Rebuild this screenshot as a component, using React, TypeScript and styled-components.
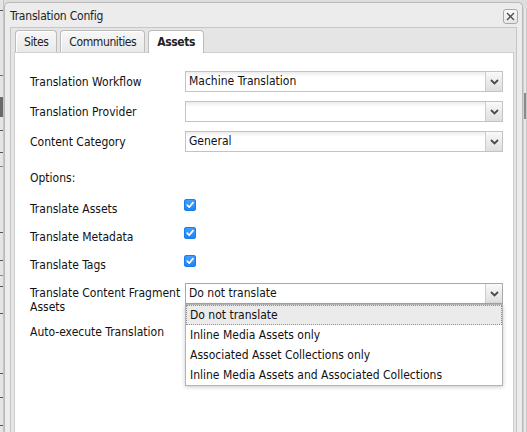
import React from "react";
import styled, { createGlobalStyle } from "styled-components";

const GlobalStyle = createGlobalStyle`
  html, body { margin: 0; padding: 0; background: #dcdcdc; }
  body {
    font-family: "DejaVu Sans Condensed", "DejaVu Sans", "Liberation Sans", sans-serif;
    font-stretch: condensed;
    font-size: 12px;
    color: #111;
  }
  * { box-sizing: border-box; }
`;

const Page = styled.div`
  width: 527px;
  height: 432px;
  display: flex;
  overflow: hidden;
  background: #dedede;
`;

const dot = (y: number, c = "#555") =>
  `linear-gradient(${c}, ${c}) 0 ${y}px / 3px 1px no-repeat`;

const LeftStrip = styled.div`
  width: 4px;
  flex: none;
  background: ${[
    dot(10),
    dot(75, "#4a6fb5"),
    "linear-gradient(#6a6a6a, #6a6a6a) 0 97px / 3px 20px no-repeat",
    dot(130),
    dot(152),
    dot(166, "#888"),
    dot(232),
    dot(260),
    dot(275, "#888"),
    dot(286),
    dot(313),
    dot(373),
    dot(397),
    dot(425),
  ].join(", ")},
    linear-gradient(90deg, #e4e4e4 0 3px, #c4c4c4 3px 4px);
`;

const RightStrip = styled.div`
  width: 4px;
  flex: none;
  margin-top: 8px;
  background: linear-gradient(#8a8a8a, #8a8a8a) 1px 85px / 2px 26px no-repeat,
    linear-gradient(90deg, #d0d0d0 0 1px, #e8e8e8 1px 3px, #c8c8c8 3px 4px);
`;

const Window = styled.div`
  width: 519px;
  flex: none;
  margin-top: 2px;
  border: 1px solid #b9b9b9;
  border-bottom: none;
  border-radius: 5px 5px 0 0;
  background: #ececec;
  padding: 0 5px;
  display: flex;
  flex-direction: column;
`;

const TitleBar = styled.div`
  height: 24px;
  display: flex;
  align-items: center;
  justify-content: space-between;
`;

const Title = styled.div`
  font-size: 12px;
  letter-spacing: -0.2px;
  color: #222;
  margin-top: 1px;
`;

const CloseButton = styled.div`
  width: 15px;
  height: 15px;
  margin-right: -1px;
  margin-top: 2px;
  border: 1px solid #a8a8a8;
  border-radius: 3px;
  background: linear-gradient(#fbfbfb, #e6e6e6);
  display: flex;
  align-items: center;
  justify-content: center;
`;

const TabPanel = styled.div`
  flex: 1;
  display: flex;
  flex-direction: column;
  border: 1px solid #c6c6c6;
  border-bottom: none;
  background: #e5e5e5;
`;

const TabStrip = styled.div`
  display: flex;
  gap: 3px;
  padding: 2px 0 0 4px;
  height: 24px;
  align-items: flex-end;
`;

const Tab = styled.div<{ $active?: boolean }>`
  height: ${(p) => (p.$active ? 23 : 22)}px;
  margin-bottom: ${(p) => (p.$active ? -1 : 0)}px;
  position: relative;
  z-index: ${(p) => (p.$active ? 2 : 0)};
  padding: 0 8px ${(p) => (p.$active ? 1 : 0)}px;
  display: flex;
  align-items: center;
  letter-spacing: -0.4px;
  border: 1px solid #bcbcbc;
  border-bottom: none;
  border-radius: 4px 4px 0 0;
  background: ${(p) =>
    p.$active ? "#ffffff" : "linear-gradient(#f7f7f7, #e9e9e9)"};
  box-shadow: inset 1px 1px 0 #ffffff;
  font-weight: ${(p) => (p.$active ? 700 : 400)};
  color: #222;
`;

const Body = styled.div`
  flex: 1;
  position: relative;
  margin: 0 2px 0 3px;
  border: 1px solid #cfcfcf;
  border-bottom: none;
  background: #ffffff;
  padding: 18px 9px 0 15px;
`;

const FieldRow = styled.div<{ $h?: number; $mb?: number }>`
  display: flex;
  align-items: flex-start;
  min-height: ${(p) => p.$h ?? 21}px;
  margin-bottom: ${(p) => p.$mb ?? 9}px;
`;

const Label = styled.div<{ $pt?: number }>`
  width: 155px;
  flex: none;
  line-height: 14px;
  padding-top: ${(p) => p.$pt ?? 4}px;
`;

const SectionLabel = styled.div`
  height: 21px;
  line-height: 14px;
  padding-top: 3px;
  margin: 16px 0 10px;
`;

const SelectWrap = styled.div`
  position: relative;
  width: 318px;
  flex: none;
`;

const SelectBox = styled.div<{ $focused?: boolean }>`
  height: 21px;
  display: flex;
  border: 1px solid ${(p) => (p.$focused ? "#a9a9a9" : "#c3c3c3")};
  background: ${(p) =>
    p.$focused ? "#ffffff" : "linear-gradient(#ececec, #ffffff 5px)"};
`;

const SelectText = styled.div`
  flex: 1;
  padding: 0 3px;
  line-height: 19px;
  color: #111;
  white-space: nowrap;
  overflow: hidden;
`;

const Trigger = styled.div`
  width: 17px;
  flex: none;
  border-left: 1px solid #cdcdcd;
  background: linear-gradient(#f9f9f9, #dedede);
  display: flex;
  align-items: center;
  justify-content: center;
`;

const DropList = styled.div`
  position: absolute;
  top: 21px;
  left: 0;
  width: 318px;
  border: 1px solid #b4b4b4;
  background: #ffffff;
  box-shadow: 0 1px 4px rgba(0, 0, 0, 0.22);
  z-index: 5;
`;

const DropItem = styled.div<{ $selected?: boolean }>`
  height: 20px;
  line-height: 18px;
  padding: 0 3px;
  border: 1px ${(p) => (p.$selected ? "dotted #8f8f8f" : "solid transparent")};
  background: ${(p) => (p.$selected ? "#ebebeb" : "transparent")};
  color: #111;
  white-space: nowrap;
`;

const CheckRow = styled.div`
  display: flex;
  align-items: flex-start;
  height: 20px;
  margin-bottom: 8px;
`;

const CheckLabel = styled.div`
  width: 154px;
  flex: none;
  line-height: 14px;
  padding-top: 3px;
`;

const CheckBox = styled.span`
  width: 12px;
  height: 12px;
  border-radius: 3px;
  background: linear-gradient(#45a3ff, #1a82f7);
  box-shadow: inset 0 0 0 1px #1b7de8;
  display: flex;
  align-items: center;
  justify-content: center;
`;

const Chevron = () => (
  <svg width="9" height="6" viewBox="0 0 9 6">
    <path d="M1 1 L4.5 4.5 L8 1" fill="none" stroke="#4a4a4a" strokeWidth="1.8" />
  </svg>
);

const Check = () => (
  <svg width="10" height="10" viewBox="0 0 10 10">
    <path d="M2.2 5.2 L4.2 7.2 L8 2.6" fill="none" stroke="#ffffff" strokeWidth="1.7" strokeLinecap="round" strokeLinejoin="round" />
  </svg>
);

const CloseIcon = () => (
  <svg width="11" height="11" viewBox="0 0 11 11">
    <path d="M2 2 L9 9 M9 2 L2 9" stroke="#4d4d4d" strokeWidth="1.3" />
  </svg>
);

const Select: React.FC<{ value: string; focused?: boolean; children?: React.ReactNode }> = ({
  value,
  focused,
  children,
}) => (
  <SelectWrap>
    <SelectBox $focused={focused}>
      <SelectText>{value}</SelectText>
      <Trigger>
        <Chevron />
      </Trigger>
    </SelectBox>
    {children}
  </SelectWrap>
);

const options = [
  "Do not translate",
  "Inline Media Assets only",
  "Associated Asset Collections only",
  "Inline Media Assets and Associated Collections",
];

export default function App() {
  return (
    <>
      <GlobalStyle />
      <Page>
        <LeftStrip />
        <Window>
          <TitleBar>
            <Title>Translation Config</Title>
            <CloseButton>
              <CloseIcon />
            </CloseButton>
          </TitleBar>
          <TabPanel>
            <TabStrip>
              <Tab>Sites</Tab>
              <Tab>Communities</Tab>
              <Tab $active>Assets</Tab>
            </TabStrip>
            <Body>
              <FieldRow>
                <Label>Translation Workflow</Label>
                <Select value="Machine Translation" />
              </FieldRow>
              <FieldRow>
                <Label>Translation Provider</Label>
                <Select value="" />
              </FieldRow>
              <FieldRow>
                <Label>Content Category</Label>
                <Select value="General" />
              </FieldRow>
              <SectionLabel>Options:</SectionLabel>
              {["Translate Assets", "Translate Metadata", "Translate Tags"].map((t) => (
                <CheckRow key={t}>
                  <CheckLabel>{t}</CheckLabel>
                  <CheckBox>
                    <Check />
                  </CheckBox>
                </CheckRow>
              ))}
              <FieldRow $h={30} $mb={8}>
                <Label $pt={3}>
                  Translate Content Fragment
                  <br />
                  Assets
                </Label>
                <Select value="Do not translate" focused>
                  <DropList>
                    {options.map((o, i) => (
                      <DropItem key={o} $selected={i === 0}>
                        {o}
                      </DropItem>
                    ))}
                  </DropList>
                </Select>
              </FieldRow>
              <FieldRow $h={20}>
                <Label $pt={3}>Auto-execute Translation</Label>
              </FieldRow>
            </Body>
          </TabPanel>
        </Window>
        <RightStrip />
      </Page>
    </>
  );
}
